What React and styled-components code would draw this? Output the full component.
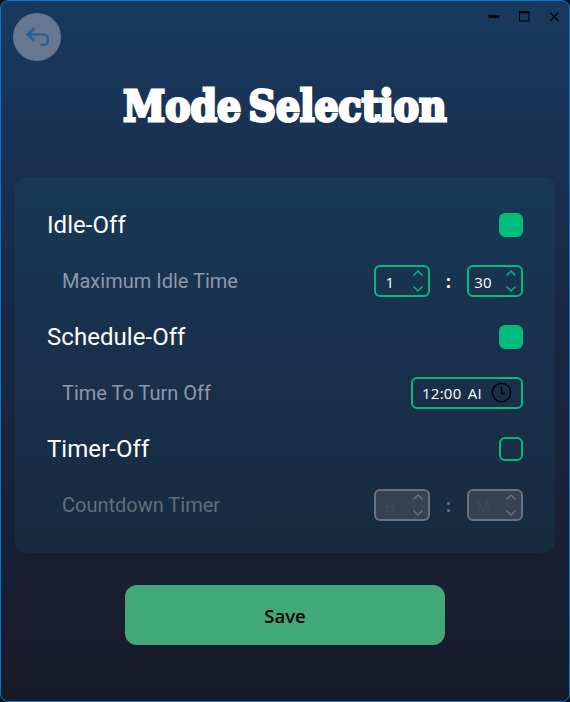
import React from "react";
import styled, { createGlobalStyle } from "styled-components";

const Global = createGlobalStyle`
  * { box-sizing: border-box; }
  body { margin: 0; background: #0b0c10; }
`;

const Window = styled.main`
  position: relative;
  width: 570px;
  height: 702px;
  overflow: hidden;
  display: flex;
  flex-direction: column;
  align-items: center;
  border: 1px solid #0078d7;
  border-radius: 8px;
  background: linear-gradient(180deg, #18395d 0%, #1a2f4f 28%, #1a2034 80%, #161b28 100%);
`;

const TopBar = styled.header`
  width: 100%;
  height: 72px;
  flex: none;
  display: flex;
  justify-content: space-between;
  align-items: flex-start;
  padding: 12px 9px 0 12px;
`;

const BackButton = styled.button`
  width: 48px;
  height: 48px;
  padding: 0;
  border: 0;
  border-radius: 50%;
  background: #667792;
  display: grid;
  place-items: center;
`;

const WindowControls = styled.div`
  display: flex;
  gap: 18px;
  margin-top: -3px;
`;

const Title = styled.h1`
  margin: 0;
  height: 104px;
  flex: none;
  color: #fff;
  font: bold 42px/68px "DejaVu Serif Condensed", "DejaVu Serif", serif;
  font-stretch: condensed;
  letter-spacing: 0.1px;
  word-spacing: -6px;
  white-space: nowrap;
  -webkit-text-stroke: 2.8px #fff;
`;

const Panel = styled.section`
  width: 540px;
  height: 376px;
  flex: none;
  padding: 20px 32px;
  border-radius: 12px;
  background: linear-gradient(180deg, #183854 0%, #19304c 48%, #172a3f 100%);
  box-shadow: 0 2px 14px rgba(18, 22, 40, 0.22);
`;

const Row = styled.div`
  height: 56px;
  display: flex;
  align-items: center;
  justify-content: space-between;
`;

const ModeName = styled.span`
  color: #fff;
  font: 24px/32px Roboto, sans-serif;
  letter-spacing: 0.05px;
`;

const OptionName = styled.span`
  padding-left: 15px;
  color: ${(p) => (p.$disabled ? "#626e7d" : "#8d99aa")};
  font: 20px/28px Roboto, sans-serif;
`;

const Toggle = styled.span`
  width: 24px;
  height: 24px;
  border: 2px solid #00bc7d;
  border-radius: 6px;
  background: ${(p) => (p.$on ? "#00bc7d" : "transparent")};
`;

const TimePair = styled.div`
  display: flex;
  align-items: center;
`;

const Field = styled.div`
  width: ${(p) => (p.$wide ? 112 : 56)}px;
  height: 32px;
  display: flex;
  align-items: center;
  border: 2px solid ${(p) => (p.$disabled ? "#6a7282" : "#00bc7d")};
  border-radius: 6px;
  background: ${(p) => (p.$disabled ? "#364153" : "transparent")};
  color: ${(p) => (p.$disabled ? "#414b5c" : "#fff")};
  font: ${(p) => (p.$disabled ? 400 : 500)} 15px/24px "Open Sans", "Noto Sans", sans-serif;
  letter-spacing: 0.25px;
`;

const Value = styled.span`
  width: 28px;
  margin-right: 8px;
  padding-top: 2px;
  text-align: center;
`;

const ClockValue = styled.span`
  width: 62px;
  margin-left: 9px;
  margin-right: 6px;
  white-space: nowrap;
  word-spacing: 2px;
`;

const Colon = styled.span`
  width: 37px;
  text-align: center;
  color: ${(p) => (p.$disabled ? "#626e7d" : "#fff")};
  font: bold 17px/24px "Open Sans", sans-serif;
  padding-top: 1px;
`;

const SaveButton = styled.button`
  width: 320px;
  height: 60px;
  flex: none;
  margin-top: 32px;
  padding: 2px 0 0;
  border: 0;
  border-radius: 12px;
  background: #41a978;
  color: #000;
  font: 600 18.5px/28px "Open Sans", "Noto Sans", sans-serif;
`;

function Stepper({ value, disabled }) {
  return (
    <Field $disabled={disabled}>
      <Value>{value}</Value>
      <svg width="12" height="28" viewBox="0 0 12 28" fill="none" stroke={disabled ? "#6a7282" : "#00bc7d"} strokeWidth="1.5">
        <path d="M1.500 8.500 6 4l4.500 4.500M1.500 19.500 6 24l4.500-4.500" />
      </svg>
    </Field>
  );
}

function Duration({ hours, minutes, disabled }) {
  return (
    <TimePair>
      <Stepper value={hours} disabled={disabled} />
      <Colon $disabled={disabled}>:</Colon>
      <Stepper value={minutes} disabled={disabled} />
    </TimePair>
  );
}

export default function App() {
  return (
    <>
      <Global />
      <Window>
        <TopBar>
          <BackButton aria-label="Back">
            <svg width="24" height="24" viewBox="0 0 24 24" fill="none" stroke="#2a5f92" strokeWidth="2.700" strokeLinecap="round" strokeLinejoin="round">
              <path d="M8.500 4 2.500 9.500l6 5.500M3 9.500H18.500a4.500 5.250 0 0 1 0 10.500h-2" />
            </svg>
          </BackButton>
          <WindowControls>
            <svg width="12" height="12" viewBox="0 0 12 12"><path d="M.500 6.500h11" stroke="#000" strokeWidth="2.500" /></svg>
            <svg width="12" height="12" viewBox="0 0 12 12" fill="none" stroke="#000"><path d="M1.500 2v9h9.500V2" strokeWidth="1.200" /><path d="M.900 2.200h10.700" strokeWidth="2.400" /></svg>
            <svg width="12" height="12" viewBox="0 0 12 12"><path d="m2 2.500 8.500 8.500m0-8.500L2 11" stroke="#000" strokeWidth="1.300" /></svg>
          </WindowControls>
        </TopBar>
        <Title>Mode Selection</Title>
        <Panel>
          <Row><ModeName>Idle-Off</ModeName><Toggle $on /></Row>
          <Row><OptionName>Maximum Idle Time</OptionName><Duration hours="1" minutes="30" /></Row>
          <Row><ModeName>Schedule-Off</ModeName><Toggle $on /></Row>
          <Row>
            <OptionName>Time To Turn Off</OptionName>
            <Field $wide>
              <ClockValue>12:00 AI</ClockValue>
              <svg width="22" height="22" viewBox="0 0 22 22" fill="none" stroke="#000" strokeWidth="1.300">
                <circle cx="11.500" cy="10.500" r="9.200" /><path d="M11.500 5v6.500h3.500" />
              </svg>
            </Field>
          </Row>
          <Row><ModeName>Timer-Off</ModeName><Toggle /></Row>
          <Row><OptionName $disabled>Countdown Timer</OptionName><Duration hours="H" minutes="M" disabled /></Row>
        </Panel>
        <SaveButton>Save</SaveButton>
      </Window>
    </>
  );
}
